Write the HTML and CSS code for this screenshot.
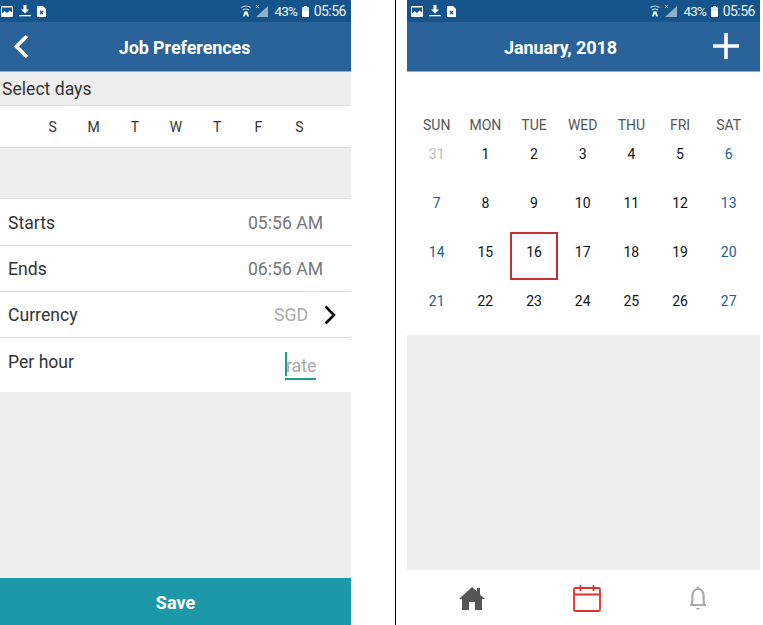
FILE: index.html
```html
<!DOCTYPE html>
<html>
<head>
<meta charset="utf-8">
<title>Job Preferences</title>
<link rel="stylesheet" href="styles.css">
</head>
<body>
<div class="page">

<section class="phone phone-left">
    <div class="statusbar">
        <div class="status-icons">
            <svg width="12" height="11" viewBox="0 0 12 11"><rect width="12" height="11" rx="1" fill="#fff"/><path d="M1 1.500H11V6.500L8.500 4.500 6 7 3.500 5 1 7.500Z" fill="#14548a"/></svg>
            <svg width="12" height="12" viewBox="0 0 12 12"><path d="M4.500 0h3v4.500H10L6 8.500 2 4.500h2.500z" fill="#fff"/><rect x="0" y="10" width="12" height="1.300" fill="#fff"/></svg>
            <svg width="9" height="11" viewBox="0 0 9 11"><path d="M0 0h6l3 3v8H0z" fill="#fff"/><path d="M3 5l3 3M6 5l-3 3" stroke="#14548a" stroke-width="1.300"/></svg>
        </div>
        <div class="status-right">
            <svg class="wifi" width="10" height="12" viewBox="0 0 10 12"><path d="M.5 2.500Q5 -.5 9.500 2.500M2 5Q5 3 8 5" fill="none" stroke="#d5e0ea" stroke-width="1.100"/><path d="M3.500 6.500h3l1.500 5h-1.500L5 9 3.500 11.500H2z" fill="#fff"/></svg>
            <svg class="signal" width="12" height="12" viewBox="0 0 12 12"><path d="M12 1V12H0z" fill="#8fb0cb"/><path d="M0 0l3 3M3 0L0 3" stroke="#b9cddd" stroke-width=".800"/></svg>
            <span class="pct">43%</span>
            <svg class="battery" width="7" height="11" viewBox="0 0 7 11"><rect x="2" y="0" width="3" height="2" fill="#dfe8f0"/><rect x="0" y="1" width="7" height="10" rx="1" fill="#dfe8f0"/><rect x="0" y="5" width="7" height="6" rx="1" fill="#fff"/></svg>
            <span class="time">05:56</span>
        </div>
    </div>
    <header class="appbar">
        <svg class="back" width="16" height="25" viewBox="0 0 16 25"><path d="M14 2 L3.500 12.500 L14 23" fill="none" stroke="#fff" stroke-width="3.800"/></svg>
        <h1>Job Preferences</h1>
    </header>

    <div class="select-title">Select days</div>
    <ul class="days">
        <li>S</li><li>M</li><li>T</li><li>W</li><li>T</li><li>F</li><li>S</li>
    </ul>
    <div class="gray-gap"></div>

    <div class="row row-starts"><span>Starts</span><span class="value">05:56 AM</span></div>
    <div class="row row-ends"><span>Ends</span><span class="value">06:56 AM</span></div>
    <div class="row row-currency">
        <span>Currency</span>
        <span class="value muted">SGD</span>
        <svg class="chevron" width="14" height="20" viewBox="0 0 14 20"><path d="M2.500 1.500 L11 10 L2.500 18.500" fill="none" stroke="#000" stroke-width="2.600"/></svg>
    </div>
    <div class="row row-rate">
        <span>Per hour</span>
        <span class="rate-input">rate</span>
    </div>

    <div class="gray-fill"></div>
    <button class="save">Save</button>
</section>

<div class="divider"></div>

<section class="phone phone-right">
    <div class="statusbar">
        <div class="status-icons">
            <svg width="12" height="11" viewBox="0 0 12 11"><rect width="12" height="11" rx="1" fill="#fff"/><path d="M1 1.500H11V6.500L8.500 4.500 6 7 3.500 5 1 7.500Z" fill="#14548a"/></svg>
            <svg width="12" height="12" viewBox="0 0 12 12"><path d="M4.500 0h3v4.500H10L6 8.500 2 4.500h2.500z" fill="#fff"/><rect x="0" y="10" width="12" height="1.300" fill="#fff"/></svg>
            <svg width="9" height="11" viewBox="0 0 9 11"><path d="M0 0h6l3 3v8H0z" fill="#fff"/><path d="M3 5l3 3M6 5l-3 3" stroke="#14548a" stroke-width="1.300"/></svg>
        </div>
        <div class="status-right">
            <svg class="wifi" width="10" height="12" viewBox="0 0 10 12"><path d="M.5 2.500Q5 -.5 9.500 2.500M2 5Q5 3 8 5" fill="none" stroke="#d5e0ea" stroke-width="1.100"/><path d="M3.500 6.500h3l1.500 5h-1.500L5 9 3.500 11.500H2z" fill="#fff"/></svg>
            <svg class="signal" width="12" height="12" viewBox="0 0 12 12"><path d="M12 1V12H0z" fill="#8fb0cb"/><path d="M0 0l3 3M3 0L0 3" stroke="#b9cddd" stroke-width=".800"/></svg>
            <span class="pct">43%</span>
            <svg class="battery" width="7" height="11" viewBox="0 0 7 11"><rect x="2" y="0" width="3" height="2" fill="#dfe8f0"/><rect x="0" y="1" width="7" height="10" rx="1" fill="#dfe8f0"/><rect x="0" y="5" width="7" height="6" rx="1" fill="#fff"/></svg>
            <span class="time">05:56</span>
        </div>
    </div>
    <header class="appbar appbar-calendar">
        <h1>January, 2018</h1>
        <svg class="plus" width="26" height="26" viewBox="0 0 26 26"><path d="M13 0V26M0 13H26" stroke="#fff" stroke-width="3.600"/></svg>
    </header>

    <div class="calendar">
        <div class="week week-head">
            <span>SUN</span><span>MON</span><span>TUE</span><span>WED</span><span>THU</span><span>FRI</span><span>SAT</span>
        </div>
        <div class="week">
            <span class="other">31</span><span>1</span><span>2</span><span>3</span><span>4</span><span>5</span><span class="weekend">6</span>
        </div>
        <div class="week">
            <span class="weekend">7</span><span>8</span><span>9</span><span>10</span><span>11</span><span>12</span><span class="weekend">13</span>
        </div>
        <div class="week">
            <span class="weekend">14</span><span>15</span><span class="today">16</span><span>17</span><span>18</span><span>19</span><span class="weekend">20</span>
        </div>
        <div class="week">
            <span class="weekend">21</span><span>22</span><span>23</span><span>24</span><span>25</span><span>26</span><span class="weekend">27</span>
        </div>
    </div>

    <div class="gray-fill"></div>

    <nav class="tabbar">
        <svg width="28" height="26" viewBox="0 0 28 26"><path d="M14 2 L1 14 L4 14 V25 H11 V17 H17 V25 H24 V14 L27 14 L22 9.500 V3 H19 V6.500 Z" fill="#555"/></svg>
        <svg width="28" height="28" viewBox="0 0 28 28"><rect x="1" y="4" width="26" height="23" rx="1.500" fill="none" stroke="#e2302c" stroke-width="1.800"/><path d="M1 10.500H27M7.500 1V7M20.500 1V7" stroke="#e2302c" stroke-width="1.800"/></svg>
        <svg width="20" height="26" viewBox="0 0 20 26"><path d="M2 20 H18 M3.500 20 C5 17 4 13 4.500 10 C5 6 7 4 10 4 C13 4 15 6 15.500 10 C16 13 15 17 16.500 20" fill="none" stroke="#aaa" stroke-width="2.200"/><circle cx="10" cy="3" r="1.500" fill="#aaa"/><path d="M7.500 23 H12.500 L10 25 Z" fill="#aaa"/></svg>
    </nav>
</section>

</div>
</body>
</html>
```

FILE: styles.css
```css
html, body {
    margin: 0;
    padding: 0;
    height: 625px;
    overflow: hidden;
    background: #fff;
}
body {
    font-family: Roboto, "Liberation Sans", sans-serif;
    color: #333;
}
.page {
    display: flex;
    height: 625px;
}
.phone {
    display: flex;
    flex-direction: column;
    height: 625px;
}
.phone-left {
    width: 351px;
}
.phone-right {
    width: 353px;
    margin-left: 11px;
}
.divider {
    width: 1px;
    margin-left: 44px;
    background: #000;
}

/* status bar */
.statusbar {
    height: 22px;
    flex: none;
    display: flex;
    align-items: center;
    justify-content: space-between;
    background: #14548a;
    color: #eef3f7;
    padding: 0 5px 0 1px;
    box-sizing: border-box;
}
.phone-right .statusbar {
    padding: 0 5px 0 4px;
}
.status-icons {
    display: flex;
    align-items: center;
    gap: 6px;
}
.status-right {
    display: flex;
    align-items: center;
    font-size: 14px;
}
.wifi {
    margin-right: 5px;
}
.signal {
    margin-right: 6px;
}
.pct {
    font-size: 13.500px;
    letter-spacing: -.8px;
    margin-right: 4.500px;
}
.time {
    letter-spacing: -.5px;
    margin-left: 5px;
}

/* header */
.appbar {
    height: 50px;
    flex: none;
    box-sizing: border-box;
    display: flex;
    align-items: center;
    justify-content: center;
    position: relative;
    padding-left: 18px;
    padding-top: 1px;
    background: #2a6399;
    border-bottom: 1px solid #8fb0d0;
}
.appbar-calendar {
    padding-left: 0;
    padding-right: 46px;
}
.appbar h1 {
    margin: 0;
    font-size: 18px;
    font-weight: 700;
    letter-spacing: -.1px;
    color: #fff;
}
.back {
    position: absolute;
    left: 13px;
    top: 12px;
}
.plus {
    position: absolute;
    right: 21px;
    top: 11px;
}

/* job preferences */
.select-title {
    height: 34px;
    flex: none;
    box-sizing: border-box;
    padding-left: 2px;
    line-height: 34px;
    font-size: 17.600px;
    background: #eee;
    border-bottom: 1px solid #ddd;
}
.days {
    display: flex;
    height: 42px;
    flex: none;
    box-sizing: border-box;
    margin: 0;
    padding: 0 31px 0 32px;
    list-style: none;
    border-bottom: 1px solid #ddd;
}
.days li {
    width: 41.600px;
    text-align: center;
    line-height: 42px;
    font-size: 14px;
}
.gray-gap {
    height: 50px;
    flex: none;
    background: #eee;
}
.row {
    display: flex;
    align-items: center;
    flex: none;
    box-sizing: border-box;
    padding: 0 28px 0 8px;
    font-size: 17.600px;
    border-top: 1px solid #ddd;
}
.row > span:first-child {
    flex: 1;
}
.row-starts {
    height: 47px;
    padding-top: 1px;
}
.row-ends {
    height: 46px;
}
.row-currency {
    height: 46px;
    padding-right: 14px;
}
.row-rate {
    height: 55px;
    align-items: flex-start;
    padding-top: 14px;
    padding-right: 35px;
}
.value {
    color: #777;
}
.muted {
    color: #aaa;
    margin-right: 15px;
}
.rate-input {
    position: relative;
    width: 31px;
    height: 29px;
    box-sizing: border-box;
    margin-top: -1px;
    padding-left: 1px;
    line-height: 31px;
    color: #aaa;
    border-bottom: 2px solid #1f9d8b;
}
.rate-input::before {
    content: "";
    position: absolute;
    left: 0;
    top: 1px;
    width: 2px;
    height: 24px;
    background: #1f9d8b;
}
.gray-fill {
    flex: 1;
    background: #eee;
}
.save {
    height: 47px;
    flex: none;
    border: none;
    padding: 2px 0 0 0;
    background: #1c98a8;
    color: #fff;
    font-family: inherit;
    font-size: 18px;
    font-weight: 700;
}

/* calendar */
.calendar {
    height: 263px;
    flex: none;
    box-sizing: border-box;
    padding: 42px 7px 0 5.400px;
}
.week {
    display: grid;
    grid-template-columns: repeat(7, 1fr);
    height: 49px;
    font-size: 14px;
    color: #111;
}
.week span {
    display: flex;
    align-items: center;
    justify-content: center;
    height: 48px;
    padding-bottom: 9px;
    box-sizing: border-box;
}
.week-head {
    height: 20px;
    color: #555;
}
.week-head span {
    height: 20px;
    padding-top: 1px;
    padding-bottom: 0;
}
.other {
    color: #bbb;
}
.weekend {
    color: #24608f;
}
.today {
    border: 2px solid #c62f37;
}

/* bottom tabs */
.tabbar {
    height: 55px;
    flex: none;
    display: flex;
    align-items: center;
    justify-content: space-between;
    padding: 0 52px 0 51px;
    background: #fff;
}
```
